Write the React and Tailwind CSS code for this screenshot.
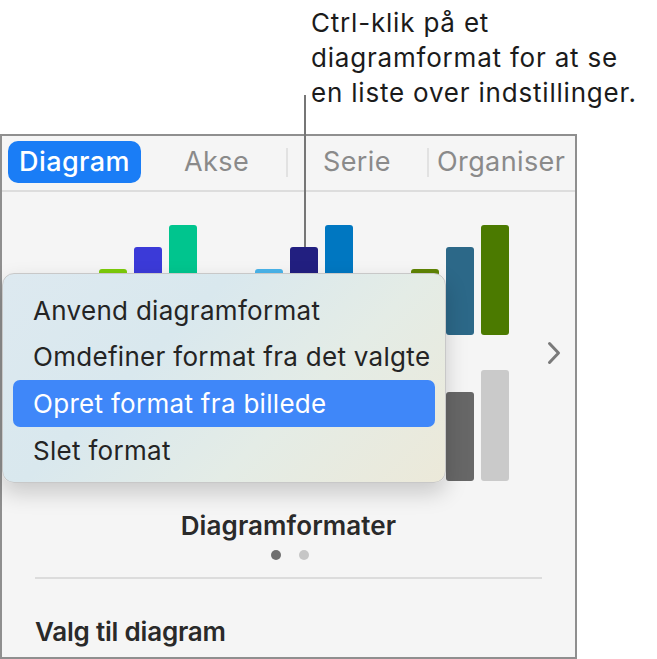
export default function App() {
  const charts = [
    [
      ["h-[66px]", "bg-[#7ccb0a]"],
      ["h-[88px]", "bg-[#3b3ad8]"],
      ["h-[110px]", "bg-[#00c58e]"],
    ],
    [
      ["h-[66px]", "bg-[#4ab4ea]"],
      ["h-[88px]", "bg-[#221f80]"],
      ["h-[110px]", "bg-[#0077c1]"],
    ],
    [
      ["h-[66px]", "bg-[#5f8404]"],
      ["h-[88px]", "bg-[#2c6888]"],
      ["h-[110px]", "bg-[#4b7a00]"],
    ],
  ];
  const charts2 = [
    [
      ["h-[44px]", "bg-[#f2a33a]"],
      ["h-[89px]", "bg-[#e0662a]"],
      ["h-[111px]", "bg-[#c53a2a]"],
    ],
    [
      ["h-[44px]", "bg-[#b98adb]"],
      ["h-[89px]", "bg-[#8a4fc4]"],
      ["h-[111px]", "bg-[#5d2a99]"],
    ],
    [
      ["h-[44px]", "bg-[#a4a4a4]"],
      ["h-[89px]", "bg-[#676767]"],
      ["h-[111px]", "bg-[#cacaca]"],
    ],
  ];

  const Row = ({ data, h }) => (
    <div className="grid grid-cols-3 w-[468px]">
      {data.map((bars, i) => (
        <div key={i} className={`flex items-end justify-center gap-[7px] ${h}`}>
          {bars.map(([hh, c], j) => (
            <div key={j} className={`w-[28px] rounded-[3px] ${hh} ${c}`} />
          ))}
        </div>
      ))}
    </div>
  );

  return (
    <div className="relative w-[657px] h-[659px] bg-white overflow-hidden font-['Inter',sans-serif]">
      {/* callout text */}
      <div className="h-[134px] pl-[311px] pt-[5px] text-[26px] leading-[35px] text-[#1b1b1b] tracking-[0.8px]">
        Ctrl-klik på et
        <br />
        diagramformat for at se
        <br />
        en liste over indstillinger.
      </div>

      {/* panel */}
      <div className="w-[577px] h-[525px] border-2 border-[#8f8f8f] bg-[#f5f5f5] flex flex-col">
        {/* tabs */}
        <div className="h-[56px] flex items-start border-b-2 border-[#dddddd] text-[27px] tracking-[0.4px] text-[#8a8a8a]">
          <div className="ml-[6px] mt-[5px] w-[133px] h-[42px] rounded-[10px] bg-[#1a7df6] text-white font-medium flex items-center justify-center">
            Diagram
          </div>
          <div className="ml-[43px] mt-[5px] w-[63px] h-[42px] flex items-center">Akse</div>
          <div className="ml-[39px] mt-[12px] w-[2px] h-[29px] bg-[#e2e2e2]" />
          <div className="ml-[35px] mt-[5px] w-[65px] h-[42px] flex items-center">Serie</div>
          <div className="ml-[39px] mt-[12px] w-[2px] h-[29px] bg-[#e2e2e2]" />
          <div className="ml-[8px] mt-[5px] h-[42px] flex items-center">Organiser</div>
        </div>

        {/* chart styles */}
        <div className="flex items-center pl-[68px] pt-[33px]">
          <div className="flex flex-col gap-[35px]">
            <Row data={charts} h="h-[110px]" />
            <Row data={charts2} h="h-[111px]" />
          </div>
          <svg className="ml-[9px]" width="14" height="24" viewBox="0 0 14 24" fill="none">
            <path d="M2.5 2.5 L11.5 12 L2.5 21.5" stroke="#7a7a7a" strokeWidth="3" strokeLinecap="round" strokeLinejoin="round" />
          </svg>
        </div>

        <div className="mt-[31px] text-center text-[26px] leading-[28px] font-semibold text-[#2a2a2a] tracking-[0.1px]">
          Diagramformater
        </div>
        <div className="mt-[10px] flex justify-center gap-[18px] pl-[2px]">
          <div className="w-[10px] h-[10px] rounded-full bg-[#6f6f6f]" />
          <div className="w-[10px] h-[10px] rounded-full bg-[#c6c6c6]" />
        </div>
        <div className="mt-[17px] mx-[33px] h-[2px] bg-[#dcdcdc]" />
        <div className="mt-[39px] pl-[33px] text-[26px] leading-[28px] font-semibold text-[#2a2a2a] tracking-[-0.2px]">
          Valg til diagram
        </div>
      </div>

      {/* callout line */}
      <div className="absolute left-[304px] top-[95px] w-[2px] h-[152px] bg-[#767676]" />

      {/* context menu */}
      <div className="absolute left-[2px] top-[273px] w-[444px] h-[210px] rounded-[12px] border border-[#c8c8c8] bg-[linear-gradient(135deg,#dde9f0_0%,#d9e8ee_35%,#e4ece6_65%,#ece9d9_100%)] shadow-[0_10px_22px_rgba(0,0,0,0.18)] pt-[13px] px-[10px] text-[26px] tracking-[0.3px] text-[#242424]">
        <div className="h-[46px] flex items-center pl-[20px]">Anvend diagramformat</div>
        <div className="h-[46px] flex items-center pl-[20px]">Omdefiner format fra det valgte</div>
        <div className="h-[47px] mt-[1px] flex items-center pl-[20px] rounded-[7px] bg-[#3f87f9] text-white">
          Opret format fra billede
        </div>
        <div className="h-[46px] flex items-center pl-[20px]">Slet format</div>
      </div>
    </div>
  );
}
